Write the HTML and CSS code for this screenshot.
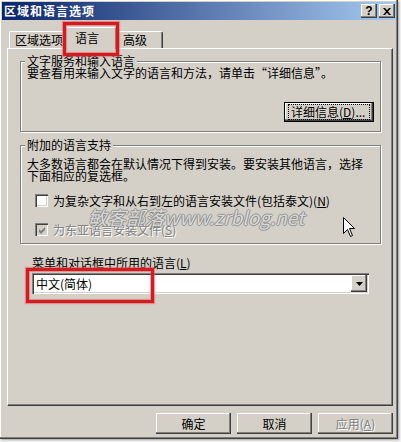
FILE: index.html
```html
<!DOCTYPE html>
<html lang="zh-CN">
<head>
<meta charset="utf-8">
<title>区域和语言选项</title>
<link rel="stylesheet" href="styles.css">
</head>
<body>
<div class="window">
  <div class="titlebar">
    <span class="title">区域和语言选项</span>
    <div class="tbtns">
      <span class="tbtn help">?</span>
      <span class="tbtn close"><svg width="8" height="7" viewBox="0 0 8 7"><path d="M0 0h2l2 2.3L6 0h2L5 3.5 8 7H6L4 4.7 2 7H0l3-3.5z" fill="#000"/></svg></span>
    </div>
  </div>
  <div class="tabs">
    <div class="tab t1">区域选项</div>
    <div class="tab t2 active">语言</div>
    <div class="tab t3">高级</div>
  </div>
  <div class="panel">
    <div class="group g1">
      <div class="legend"><span>文字服务和输入语言</span></div>
      <p class="text text1">要查看用来输入文字的语言和方法，请单击“详细信息”。</p>
      <div class="btnrow"><button class="btn focus"><span class="focusrect">详细信息(<u>D</u>)...</span></button></div>
    </div>
    <div class="group g2">
      <div class="legend"><span>附加的语言支持</span></div>
      <p class="text text2">大多数语言都会在默认情况下得到安装。要安装其他语言，选择<br>下面相应的复选框。</p>
      <div class="check c1"><span class="box"></span><span>为复杂文字和从右到左的语言安装文件(包括泰文)(<u>N</u>)</span></div>
      <div class="check c2 disabled"><span class="box checked"><svg width="7" height="7" viewBox="0 0 7 7"><path d="M0 2l2 2 4-4v3l-4 4-2-2z" fill="#808080"/></svg></span><span class="dtext">为东亚语言安装文件(<u>S</u>)</span></div>
    </div>
    <div class="menulabel">菜单和对话框中所用的语言(<u>L</u>)</div>
    <div class="combo">
      <span class="value">中文(简体)</span>
      <span class="drop"><svg width="7" height="4" viewBox="0 0 7 4"><path d="M0 0h7L3.5 4z" fill="#000"/></svg></span>
    </div>
  </div>
  <div class="buttons">
    <button class="btn">确定</button>
    <button class="btn">取消</button>
    <button class="btn disabled"><span class="dtext">应用(<u>A</u>)</span></button>
  </div>
  <div class="hl hl-tab"></div>
  <div class="hl hl-combo"></div>
  <div class="watermark">敏客部落www.zrblog.net</div>
  <svg class="cursor" width="13" height="21" viewBox="0 0 13 21"><path d="M0.5 0.5V16.5L4.5 12.5L7.5 19.5L9.5 18.5L6.5 11.5H11.5Z" fill="#fff" stroke="#000" stroke-width="1" stroke-linejoin="miter"/></svg>
</div>
</body>
</html>
```
FILE: styles.css
```css
* { box-sizing: border-box; }
html, body { margin: 0; }
body {
  width: 401px;
  height: 442px;
  overflow: hidden;
  background: #f4f4f4;
  font-family: "Noto Sans CJK SC", "Noto Sans", sans-serif;
  font-size: 12px;
  line-height: 12px;
  color: #000;
}
.window {
  position: relative;
  width: 398px;
  height: 439px;
  padding: 2px;
  background: #d4d0c8;
  box-shadow: inset -1px -1px 0 #404040, inset -2px -2px 0 #808080, inset 1px 1px 0 #fff, 1px 1px 2px rgba(0,0,0,0.35);
}
.titlebar {
  height: 18px;
  display: flex;
  align-items: center;
  justify-content: space-between;
  padding: 0 1px 0 2px;
  background: linear-gradient(to right, #0a246a, #a6caf0);
}
.title {
  color: #fff;
  font-weight: bold;
  letter-spacing: 1px;
}
.tbtns { display: flex; gap: 2px; }
.tbtn {
  width: 16px;
  height: 14px;
  display: flex;
  align-items: center;
  justify-content: center;
  background: #d4d0c8;
  box-shadow: inset -1px -1px 0 #404040, inset -2px -2px 0 #808080, inset 1px 1px 0 #fff;
  font: bold 12px/12px "Liberation Sans", sans-serif;
  color: #000;
}
.tabs {
  display: flex;
  align-items: flex-end;
  height: 21px;
  margin: 7px 0 0 7px;
  position: relative;
  z-index: 1;
}
.tab {
  height: 17px;
  padding-top: 2px;
  background: #d4d0c8;
  border-top: 1px solid #fff;
  border-left: 1px solid #fff;
  border-right: 1px solid #404040;
  border-radius: 2px 2px 0 0;
  box-shadow: inset -1px 0 0 #808080;
  white-space: nowrap;
}
.t1 { width: 57px; padding-left: 5px; }
.t2 { width: 53px; padding-left: 10px; }
.t3 { width: 48px; padding-left: 7px; }
.tab.active {
  height: 22px;
  padding-top: 4px;
  margin: 0 -2px -1px;
  position: relative;
  z-index: 1;
}
.panel {
  margin-left: 5px;
  width: 386px;
  height: 358px;
  padding-left: 12px;
  border: 1px solid;
  border-color: #fff #404040 #404040 #fff;
  box-shadow: inset -1px -1px 0 #808080;
  overflow: hidden;
}
.group {
  width: 361px;
  padding: 0 6px;
  border: 1px solid #808080;
  box-shadow: inset 1px 1px 0 #fff, 1px 1px 0 #fff;
}
.g1 { margin-top: 12px; padding-bottom: 9px; }
.g2 { margin-top: 13px; padding-bottom: 7px; }
.legend { margin-top: -7px; height: 12px; }
.legend span {
  display: inline-block;
  height: 12px;
  padding: 0 2px;
  margin-left: -2px;
  background: #d4d0c8;
  white-space: nowrap;
}
.text { margin: 0; white-space: nowrap; }
.text1 { font-feature-settings: "fwid"; }
.text2 { margin-top: 7px; }
.btnrow { display: flex; justify-content: flex-end; margin-top: 23px; }
.btn {
  width: 75px;
  height: 21px;
  padding: 0;
  border: none;
  background: #d4d0c8;
  box-shadow: inset -1px -1px 0 #404040, inset -2px -2px 0 #808080, inset 1px 1px 0 #fff;
  font: inherit;
  color: #000;
  display: flex;
  align-items: center;
  justify-content: center;
  white-space: nowrap;
}
.btn.focus {
  width: 90px;
  height: 20px;
  border: 1px solid #000;
}
.focusrect {
  display: block;
  width: 80px;
  height: 14px;
  line-height: 12px;
  outline: 1px dotted #000;
  outline-offset: 0;
  padding: 1px 0 0 2px;
  text-align: left;
}
.check {
  display: flex;
  align-items: center;
  height: 13px;
  margin-left: 8px;
  gap: 5px;
  white-space: nowrap;
}
.c1 { margin-top: 12px; }
.c2 { margin-top: 16px; }
.box {
  flex: none;
  width: 13px;
  height: 13px;
  background: #fff;
  box-shadow: inset 1px 1px 0 #808080, inset 2px 2px 0 #404040, inset -1px -1px 0 #fff, inset -2px -2px 0 #d4d0c8;
  display: flex;
  align-items: center;
  justify-content: center;
}
.box.checked { background: #d4d0c8; padding: 1px 0 0 1px; }
.dtext { color: #808080; text-shadow: 1px 1px 0 #fff; }
.menulabel { margin: 13px 0 0 12px; white-space: nowrap; }
.combo {
  margin: 4px 0 0 12px;
  width: 337px;
  height: 21px;
  padding: 2px;
  background: #fff;
  box-shadow: inset 1px 1px 0 #808080, inset 2px 2px 0 #404040, inset -1px -1px 0 #fff, inset -2px -2px 0 #d4d0c8;
  display: flex;
  align-items: center;
  justify-content: space-between;
}
.combo .value { padding-left: 2px; }
.drop {
  width: 16px;
  height: 17px;
  background: #d4d0c8;
  box-shadow: inset -1px -1px 0 #404040, inset -2px -2px 0 #808080, inset 1px 1px 0 #fff;
  display: flex;
  align-items: center;
  justify-content: center;
}
.buttons {
  display: flex;
  justify-content: flex-end;
  gap: 6px;
  margin: 7px 3px 0 0;
}
.hl {
  position: absolute;
  border: 3px solid #d21c22;
  box-shadow: 0 0 1px 1px rgba(225, 90, 90, 0.55), inset 0 0 1px 1px rgba(225, 90, 90, 0.55);
  z-index: 5;
}
.hl-tab { left: 63px; top: 22px; width: 56px; height: 34px; }
.hl-combo { left: 26px; top: 268px; width: 128px; height: 35px; }
.watermark {
  position: absolute;
  left: 88px;
  top: 207px;
  font-size: 19px;
  line-height: 20px;
  font-style: italic;
  color: rgba(228, 228, 228, 0.9);
  text-shadow: 1px 0 0 rgba(130,130,130,0.75), -1px 0 0 rgba(130,130,130,0.75), 0 1px 0 rgba(130,130,130,0.75), 0 -1px 0 rgba(130,130,130,0.75);
  white-space: nowrap;
  z-index: 4;
}
.cursor { position: absolute; left: 343px; top: 217px; z-index: 6; }
```
